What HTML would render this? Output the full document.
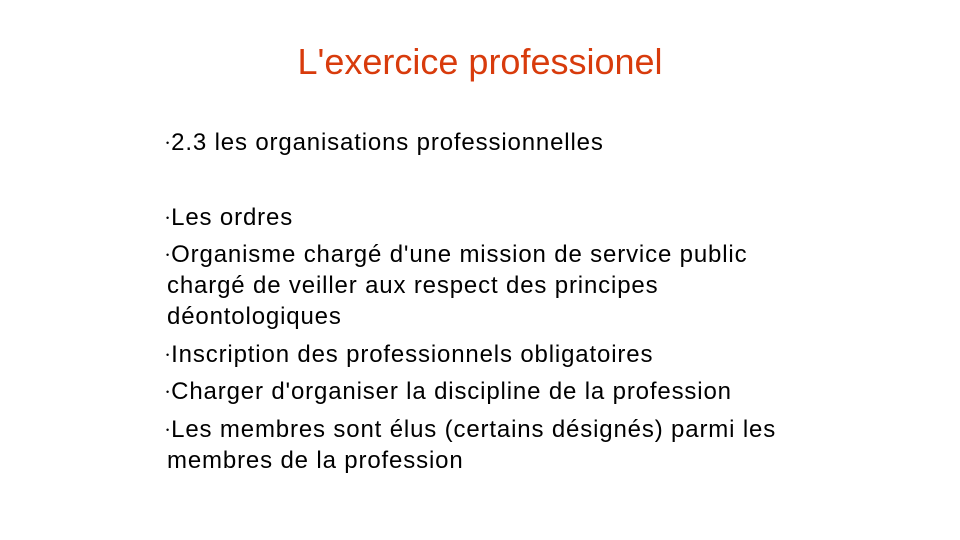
<!DOCTYPE html>
<html><head><meta charset="utf-8"><style>
body{margin:0;width:960px;height:540px;background:#fff;position:relative;overflow:hidden;font-family:"Liberation Sans",Arial,sans-serif;}
.t{position:absolute;left:0;width:960px;text-align:center;top:40px;font-size:36px;line-height:44px;color:#d83b0c;}
.l{position:absolute;font-size:24px;line-height:31px;color:#000;white-space:nowrap;letter-spacing:0.85px;}
.b{font-size:9px;vertical-align:0.4em;margin-right:2px;letter-spacing:0;}
</style></head><body>
<div class="t">L'exercice professionel</div>
<div class="l" style="left:166px;top:127px"><span class="b">•</span>2.3 les organisations professionnelles</div>
<div class="l" style="left:166px;top:202px"><span class="b">•</span>Les ordres</div>
<div class="l" style="left:166px;top:239px"><span class="b">•</span>Organisme chargé d'une mission de service public</div>
<div class="l" style="left:167px;top:270px">chargé de veiller aux respect des principes</div>
<div class="l" style="left:167px;top:301px">déontologiques</div>
<div class="l" style="left:166px;top:339px"><span class="b">•</span>Inscription des professionnels obligatoires</div>
<div class="l" style="left:166px;top:376px"><span class="b">•</span>Charger d'organiser la discipline de la profession</div>
<div class="l" style="left:166px;top:414px"><span class="b">•</span>Les membres sont élus (certains désignés) parmi les</div>
<div class="l" style="left:167px;top:445px">membres de la profession</div>
</body></html>
